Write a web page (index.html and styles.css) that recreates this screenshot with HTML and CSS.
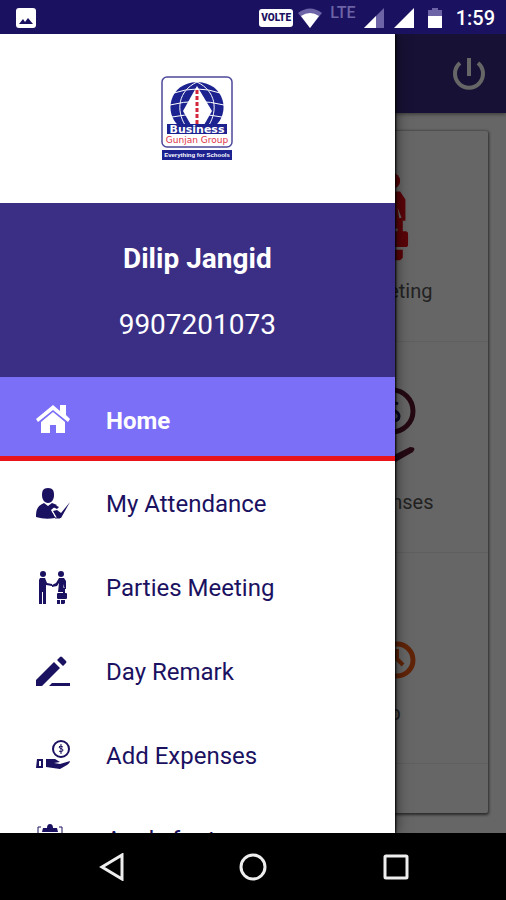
FILE: index.html
```html
<!DOCTYPE html>
<html lang="en">
<head>
  <meta charset="UTF-8">
  <meta name="viewport" content="width=device-width, initial-scale=1.0">
  <title>Business Gunjan Group</title>
  <link rel="stylesheet" href="styles.css">
</head>
<body>
  <header class="status-bar">
    <svg class="status-photo" width="20" height="20" viewBox="0 0 20 20">
      <rect width="20" height="20" rx="3" fill="#fff"/>
      <path d="M3 16l4-5 2 3 3-4 5 6z" fill="#1b1161"/>
    </svg>
    <span class="volte">VOLTE</span>
    <svg width="24" height="20" viewBox="0 0 24 20">
      <path d="M0 5Q12-4 24 5L12 20z" fill="#6c64a6"/>
      <path d="M3 8Q12 2 21 8L12 20z" fill="#fff"/>
    </svg>
    <span class="lte">LTE</span>
    <svg width="20" height="20" viewBox="0 0 20 20">
      <path d="M20 0v20H0z" fill="#6c64a6"/>
      <path d="M12 8v12H0z" fill="#fff"/>
    </svg>
    <svg class="signal" width="20" height="20" viewBox="0 0 20 20">
      <path d="M20 0v20H0z" fill="#fff"/>
    </svg>
    <svg class="battery" width="14" height="20" viewBox="0 0 14 20">
      <path d="M4 0h6v2h4v7H0V2h4z" fill="#6c64a6"/>
      <path d="M0 8h14v12H0z" fill="#fff"/>
    </svg>
    <span class="time">1:59</span>
  </header>

  <div class="screen">
    <div class="app-bar">
      <button class="power" aria-label="Logout">
        <svg width="34" height="34" viewBox="0 0 34 34" fill="none" stroke="#fff" stroke-width="4">
          <path d="M17 1v18"/>
          <path d="M8 6a14 14 0 1 0 18 0"/>
        </svg>
      </button>
    </div>

    <main class="dashboard">
      <div class="card">
        <div class="cell">
          <svg width="90" height="90" viewBox="0 0 34 34" fill="#e00a14">
            <use href="#meeting"/>
          </svg>
          <span>Party Meeting</span>
        </div>
        <div class="cell">
          <svg width="90" height="90" viewBox="0 0 90 90" fill="none">
            <circle cx="66" cy="27" r="21" stroke="#5a1830" stroke-width="5"/>
            <path d="M72 20q-10-5-11 1c0 6 12 4 12 11 0 6-9 6-13 2M67 14v26" stroke="#1b1161" stroke-width="3"/>
            <path d="M26 62h22l14 7-16 2 20 1 18-9q7 0 3 5L66 80q-6 4-12 2l-28-4z" fill="#5a1830"/>
            <path d="M2 60h18v20H2z" fill="#5a1830"/>
          </svg>
          <span>Add Expenses</span>
        </div>
        <div class="cell">
          <svg width="90" height="90" viewBox="0 0 90 90" fill="none" stroke="#f05a14" stroke-width="5">
            <path d="M50 80H8V16h48v22M8 32h48M24 8v14M44 8v14"/>
            <circle cx="71" cy="65" r="16"/>
            <path d="M71 54v10l6 6" stroke-width="4"/>
          </svg>
          <span>Pickup</span>
        </div>
      </div>
    </main>

    <div class="scrim"></div>

    <aside class="drawer">
      <div class="logo">
        <svg width="72" height="86" viewBox="0 0 72 86" role="img" aria-label="Business Gunjan Group">
          <rect x="1" y="1" width="70" height="70" rx="5" fill="#fff" stroke="#4d489b" stroke-width="1.5"/>
          <path d="M18 50C3 38 7 7 36 6c29 1 33 32 18 44z" fill="#1c2290"/>
          <g fill="none" stroke="#fff">
            <path d="M36 6C17 15 15 34 24 49M36 6c19 9 21 28 12 43"/>
            <path d="M13 17q23-8 46 0M9 29q27-7 54 0M11 41q25-5 50 0"/>
          </g>
          <path d="M36 10L22 35l8 14h13l8-14z" fill="#fff"/>
          <path d="M36 14v34" stroke="#d3263d" stroke-width="3" stroke-dasharray="4 2"/>
          <path d="M6 48h60v10H6z" fill="#1c2290"/>
          <text class="logo-top" x="36" y="57">Business</text>
          <text class="logo-group" x="36" y="67">Gunjan Group</text>
          <path d="M1 74h70v10H1z" fill="#1c2290"/>
          <text class="logo-tag" x="36" y="81">Everything for Schools</text>
        </svg>
      </div>

      <div class="user">
        <div class="user-name">Dilip Jangid</div>
        <div>9907201073</div>
      </div>

      <nav class="menu">
        <a class="active" href="#">
          <svg width="34" height="34" viewBox="0 0 34 34" fill="#fff">
            <path d="M17 1L0 15l2 3L17 6l15 12 2-3-4-4V1h-6v6z"/>
            <path d="M17 8L5 18v11h9v-8h6v8h9V18z"/>
          </svg>
          Home
        </a>
        <a href="#">
          <svg width="34" height="34" viewBox="0 0 34 34">
            <path d="M12 1c5 0 6 3 6 7s-2 8-6 8-6-4-6-8 1-7 6-7z"/>
            <path d="M8 16l4 3 4-3 5 2-6 5 4 8q-10 2-19-1c0-7 1-11 8-14z"/>
            <path d="M17 20l2-2 4 2-2 2zM17 24l4-1 4 3 9-11-9 16h-4z"/>
            <path d="M16 26l3 5h5" fill="none" stroke="#1b1161"/>
          </svg>
          My Attendance
        </a>
        <a href="#">
          <svg width="34" height="34" viewBox="0 0 34 34">
            <g id="meeting">
              <circle cx="7" cy="3" r="3"/>
              <path d="M4 7h5l2 5 5 1v2l-6-1v19H7V21H6v12H3V9z"/>
              <circle cx="25" cy="3" r="3"/>
              <path d="M23 7h5l2 3v8h-1l-2-5 1 6-1 2h-5l1-9-2 3-5 1v-2l4-2z"/>
              <path d="M27 19v-2h2v5h1q1 0 1 1v4q0 1-1 1h-8q-1 0-1-1v-4q0-1 1-1h5zM21 29h3v4h-3zM25 29h4v3l-1 1h-3z"/>
            </g>
          </svg>
          Parties Meeting
        </a>
        <a href="#">
          <svg width="34" height="34" viewBox="0 0 34 34">
            <path d="M0 25L18 7l6 6L6 31H0zM21 5l3-3q1-1 2 0l4 4q1 1 0 2l-3 3zM16 28h18v3H13z"/>
          </svg>
          Day Remark
        </a>
        <a href="#">
          <svg width="34" height="34" viewBox="0 0 34 34">
            <circle cx="25" cy="10" r="8" fill="none" stroke="#1b1161" stroke-width="2"/>
            <path d="M27 8q-4-2-4 0c0 2 4 1 4 3s-3 2-4 1M25 5v10" fill="none" stroke="#1b1161"/>
            <path d="M1 20h6v9H0zM10 20h9l5 3-6 1 6 1 10-3q0 2-3 4l-7 4-14-2z"/>
            <path d="M3 22v5h2v-5" fill="#fff"/>
          </svg>
          Add Expenses
        </a>
        <a href="#">
          <svg width="34" height="34" viewBox="0 0 34 34">
            <path d="M5 4H2v28h24V4h-3M8 15h12M8 20h12M8 25h12" fill="none" stroke="#1b1161"/>
            <path d="M6 9l1-4h4q0-4 3-4t3 4h4l1 4z"/>
          </svg>
          Apply for tour
        </a>
      </nav>
    </aside>
  </div>

  <footer class="nav-bar">
    <button aria-label="Back">
      <svg width="28" height="28" viewBox="0 0 28 28"><path d="M26 2v24L6 14z"/></svg>
    </button>
    <button aria-label="Home">
      <svg width="28" height="28" viewBox="0 0 28 28"><circle cx="14" cy="14" r="12"/></svg>
    </button>
    <button aria-label="Recent apps">
      <svg width="28" height="28" viewBox="0 0 28 28"><rect x="3" y="3" width="22" height="22" rx="1"/></svg>
    </button>
  </footer>
</body>
</html>
```
FILE: styles.css
```css
* {
  box-sizing: border-box;
}
body {
  display: flex;
  flex-direction: column;
  height: 100vh;
  margin: 0;
  overflow: hidden;
  font-family: Roboto, Arial, sans-serif;
  background: #000;
}
svg {
  display: block;
  flex-shrink: 0;
}
button {
  padding: 0;
  border: none;
  background: none;
  cursor: pointer;
}

/* status bar */
.status-bar {
  display: flex;
  flex-shrink: 0;
  align-items: center;
  gap: 8px;
  height: 34px;
  padding: 2px 11px 0 16px;
  background: #1b1161;
  color: #fff;
}
.status-photo {
  margin-right: auto;
}
.volte {
  width: 34px;
  margin-right: -3px;
  border-radius: 3px;
  background: #fff;
  color: #1b1161;
  font-size: 10px;
  font-weight: 900;
  line-height: 18px;
  text-align: center;
}
.lte {
  align-self: flex-start;
  color: #6c64a6;
  font-size: 16px;
  font-weight: 500;
  line-height: 22px;
}
.signal {
  margin-left: 2px;
}
.battery {
  margin: 0 6px;
}
.time {
  font-size: 20px;
  font-weight: 500;
}

/* dashboard behind the drawer */
.screen {
  position: relative;
  display: flex;
  flex: 1;
  flex-direction: column;
  min-height: 0;
  overflow: hidden;
  background: #fff;
}
.app-bar {
  display: flex;
  flex-shrink: 0;
  align-items: center;
  justify-content: flex-end;
  height: 79px;
  padding: 0 20px;
  background: #3a2e85;
  box-shadow: 0 1px 4px rgba(0, 0, 0, 0.5);
}
.dashboard {
  flex: 1;
  padding: 18px 18px 20px;
}
.card {
  height: 100%;
  border-radius: 2px;
  box-shadow: 0 1px 3px 1px rgba(0, 0, 0, 0.6);
}
.cell {
  display: flex;
  flex-direction: column;
  align-items: center;
  gap: 12px;
  height: 211px;
  padding: 42px 0 0 50%;
  border-bottom: 1px solid #eee;
  color: #555;
  font-size: 20px;
  line-height: 32px;
  white-space: nowrap;
}
.scrim {
  position: absolute;
  inset: 0;
  background: rgba(0, 0, 0, 0.6);
}

/* drawer */
.drawer {
  position: absolute;
  top: 0;
  bottom: 0;
  left: 0;
  width: 78%;
  overflow: hidden;
  background: #fff;
  box-shadow: 1px 0 2px #000, 2px 0 12px rgba(0, 0, 0, 0.5);
}
.logo {
  display: flex;
  align-items: center;
  justify-content: center;
  height: 169px;
}
.logo text {
  font-family: "DejaVu Sans", Arial, sans-serif;
  text-anchor: middle;
}
.logo-top {
  fill: #fff;
  font-size: 11px;
  font-weight: bold;
}
.logo-group {
  fill: #e0324a;
  font-size: 9px;
}
.logo .logo-tag {
  fill: #fff;
  font-family: Arial, sans-serif;
  font-size: 6px;
  font-weight: bold;
}
.user {
  padding: 23px 0 19px;
  background: #3a2e85;
  color: #fff;
  font-size: 28px;
  line-height: 66px;
  text-align: center;
}
.user-name {
  font-weight: bold;
}
.menu a {
  display: flex;
  align-items: center;
  gap: 36px;
  height: 84px;
  padding: 2px 36px 0;
  color: #1b1161;
  fill: #1b1161;
  font-size: 24px;
  text-decoration: none;
  white-space: nowrap;
}
.menu .active {
  border-bottom: 5px solid #e8141a;
  padding-top: 8px;
  background: #7b6ff8;
  color: #fff;
  font-weight: bold;
}

/* android buttons */
.nav-bar {
  display: flex;
  flex-shrink: 0;
  align-items: center;
  justify-content: space-between;
  height: 67px;
  padding: 0 19%;
}
.nav-bar svg {
  fill: none;
  stroke: #eee;
  stroke-width: 3;
}
```
